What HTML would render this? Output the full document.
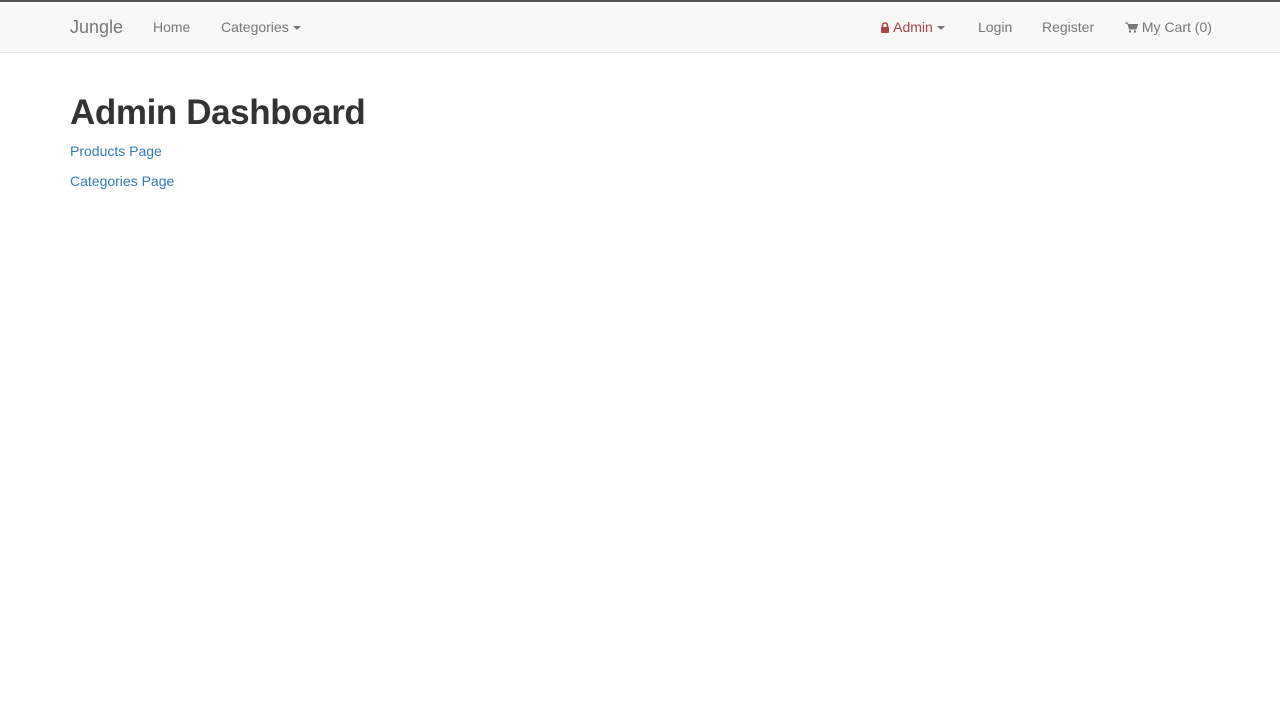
<!DOCTYPE html>
<html><head><meta charset="utf-8"><style>
*{box-sizing:border-box}
body{margin:0;font-family:"Liberation Sans",Arial,sans-serif;font-size:14px;color:#333;background:#fff;width:1280px;height:728px;overflow:hidden}
.nav{position:absolute;top:0;left:0;width:1280px;height:53px;background:#f8f8f8;border-top:2px solid #555;border-bottom:1px solid #e7e7e7}
.nav span{position:absolute;top:17px;color:#777;font-size:14px;white-space:nowrap}
.brand{font-size:18px!important;top:15px!important}
.caret{display:inline-block;width:0;height:0;border-top:4px solid;border-left:4px solid transparent;border-right:4px solid transparent;vertical-align:middle;margin-left:4px}
h1{position:absolute;left:70px;top:93px;margin:0;font-size:35px;font-weight:bold;color:#333;letter-spacing:-0.4px}
a{color:#337ab7;text-decoration:none;position:absolute;left:70px;font-size:14px}
</style></head><body>
<div class="nav">
<span class="brand" style="left:70px">Jungle</span>
<span style="left:153px">Home</span>
<span style="left:221px">Categories<i class="caret"></i></span>
<span style="left:880px;color:#a94442"><svg width="10" height="11" viewBox="0 0 10 11" style="vertical-align:-1px"><path d="M2.5 5V3.5a2.5 2.5 0 0 1 5 0V5" fill="none" stroke="#a94442" stroke-width="1.6"/><rect x="1" y="5" width="8" height="6" rx="1" fill="#a94442"/></svg> Admin<i class="caret" style="color:#777"></i></span>
<span style="left:978px">Login</span>
<span style="left:1042px">Register</span>
<span style="left:1125px"><svg width="13" height="11" viewBox="0 0 13 11" style="vertical-align:-1px"><path d="M0 1h2.5l2 6h6.5l1.5-4.5H3.5" fill="#777" stroke="#777" stroke-width="1"/><circle cx="5" cy="9.5" r="1.2" fill="#777"/><circle cx="10" cy="9.5" r="1.2" fill="#777"/></svg> My Cart (0)</span>
</div>
<h1>Admin Dashboard</h1>
<a style="top:143px">Products Page</a>
<a style="top:173px">Categories Page</a>
</body></html>
